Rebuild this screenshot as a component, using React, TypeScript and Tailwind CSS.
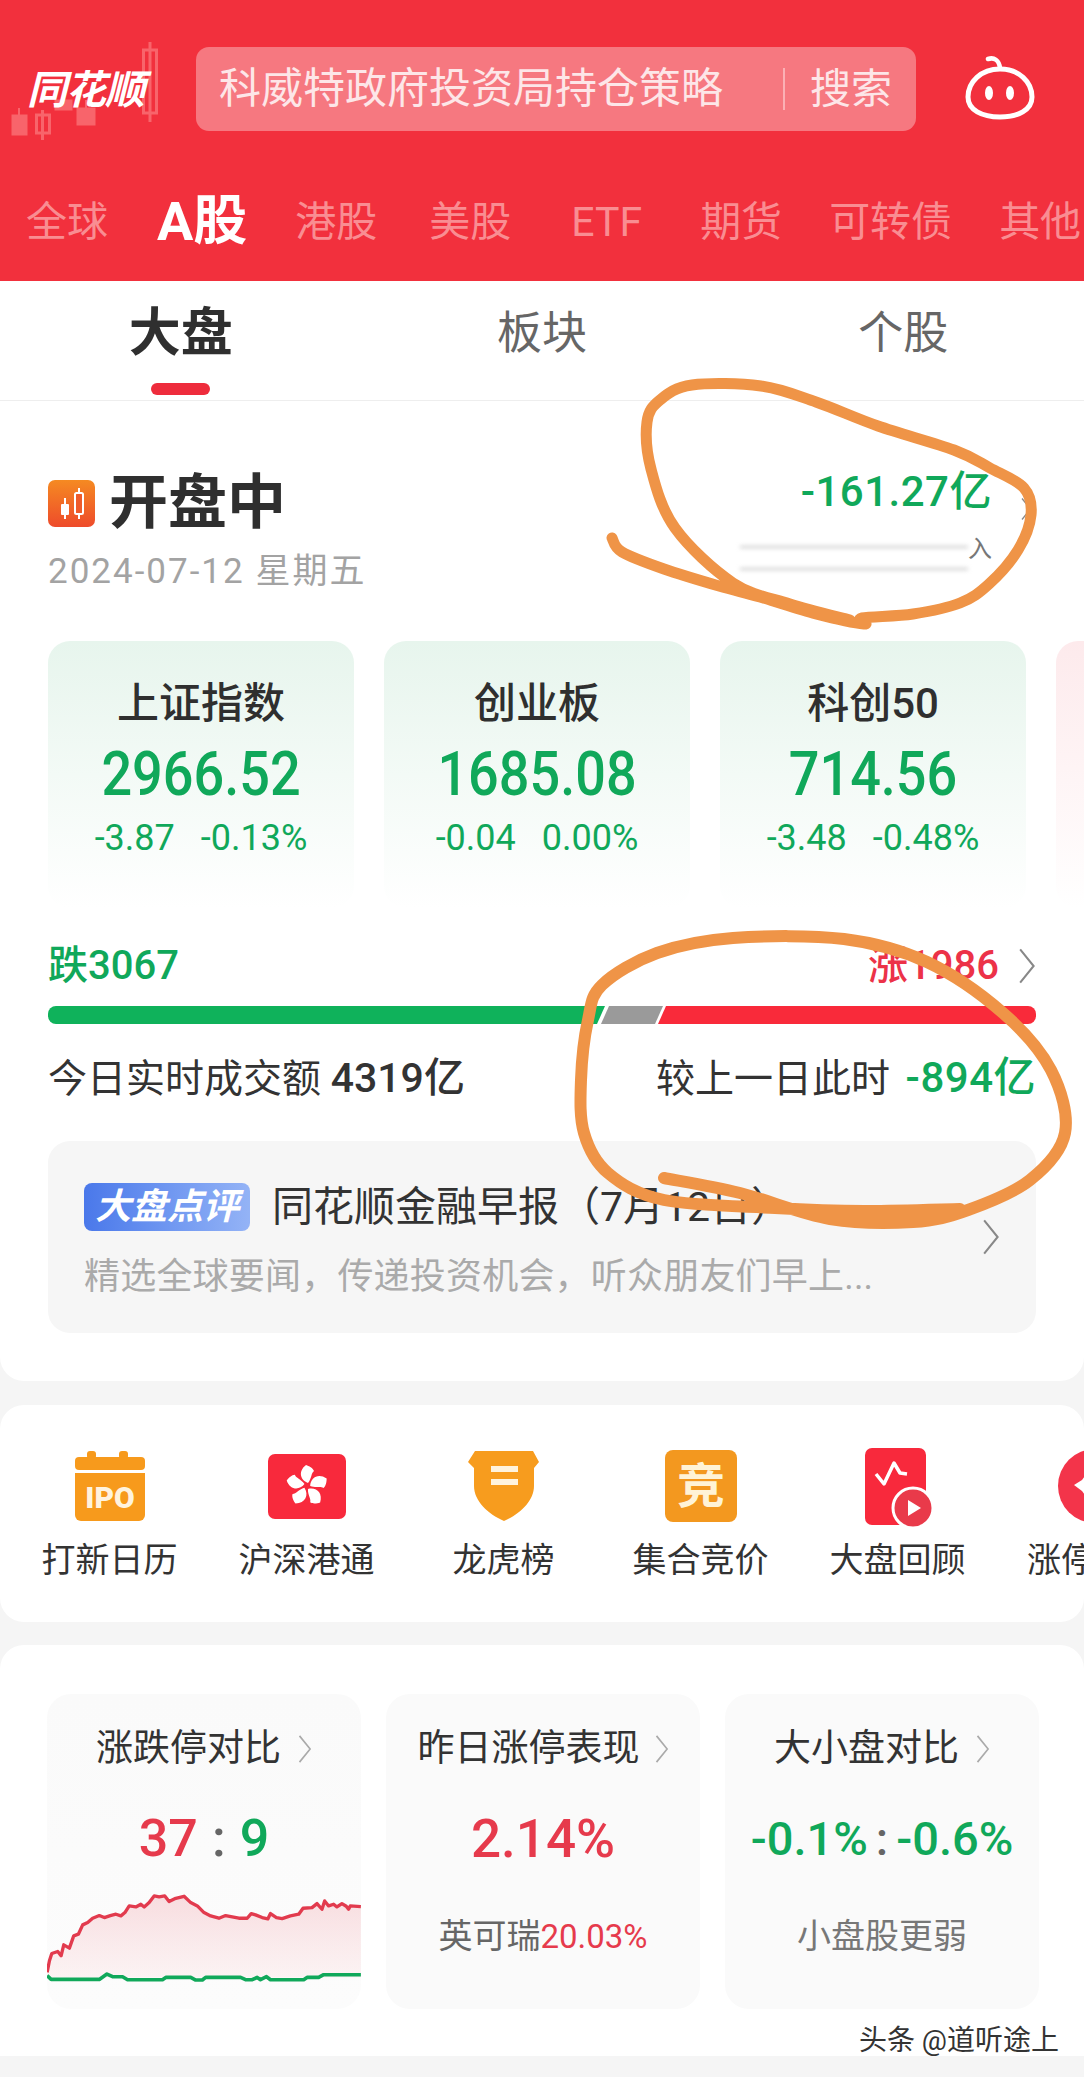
import React from "react";

// Smooth line through a list of points (Catmull-Rom converted to cubic Bezier).
function smooth(pts: number[][]): string {
  let d = `M${pts[0][0]} ${pts[0][1]}`;
  for (let i = 0; i < pts.length - 1; i++) {
    const p0 = pts[Math.max(i - 1, 0)];
    const p1 = pts[i];
    const p2 = pts[i + 1];
    const p3 = pts[Math.min(i + 2, pts.length - 1)];
    d += ` C${p1[0] + (p2[0] - p0[0]) / 6} ${p1[1] + (p2[1] - p0[1]) / 6} ${p2[0] - (p3[0] - p1[0]) / 6} ${p2[1] - (p3[1] - p1[1]) / 6} ${p2[0]} ${p2[1]}`;
  }
  return d;
}

const RING_TOP = [
  [612, 538], [622, 552], [664, 569], [719, 586], [760, 597], [816, 614], [864, 624], [862, 618], [913, 614], [960, 603], [989, 584],
  [1018, 550], [1031, 515], [1024, 488], [990, 468], [954, 450], [878, 426], [816, 402], [761, 386], [692, 385], [660, 400], [647, 422],
  [651, 469], [675, 528], [733, 583], [790, 604], [850, 620],
];
const RING_BOTTOM = [
  [664, 1178], [740, 1193], [830, 1219], [913, 1222], [968, 1210], [1030, 1180], [1065, 1133], [1051, 1070], [1003, 1013], [927, 962],
  [844, 939], [733, 938], [657, 953], [602, 985], [588, 1020], [581, 1080], [584, 1133], [608, 1173], [664, 1200], [775, 1208], [864, 1211], [960, 1209],
];

const RED_LINE = "78,575 85,540 92,518 110,512 120,525 128,492 145,502 158,465 172,460 185,432 200,425 215,412 235,404 250,410 268,404 285,400 300,405 312,395 325,375 345,378 360,370 370,378 385,365 400,345 415,348 432,345 445,362 465,352 490,346 510,365 530,375 550,395 570,405 595,412 615,404 635,408 655,412 680,412 692,398 705,402 725,410 742,414 750,398 768,410 785,413 810,405 835,400 848,382 875,380 890,368 905,385 913,360 925,375 940,370 950,378 965,368 978,376 985,385 990,375 1022,377";
const GREEN_LINE = "78,585 90,596 235,596 258,580 275,588 305,588 320,597 425,597 435,590 510,590 525,598 545,598 555,590 660,590 675,597 695,597 710,590 720,597 738,588 750,597 850,597 860,590 895,590 910,582 1022,582";

function Chevron({ className }: { className: string }) {
  return (
    <svg viewBox="0 0 12 24" fill="none" className={className}>
      <path d="M2 1.500 10.500 12 2 22.500" stroke="currentColor" strokeWidth="1.300" />
    </svg>
  );
}

function LogoCandles() {
  return (
    <svg viewBox="0 0 170 100" className="absolute left-0 -top-[7px] h-[100px] w-[170px]">
      <g fill="#f8646b" stroke="#f8646b">
        <path d="M150 2v80M143.500 10h13v63h-13z" fill="none" strokeWidth="3" />
        <path d="M42.500 70v33M36.500 75h13v18h-13z" fill="none" strokeWidth="3" />
        <rect x="12" y="75" width="15" height="20" />
        <rect x="77" y="68" width="18" height="17" />
        <rect x="55" y="60" width="17" height="10" />
        <path d="M19 68v10M86 60v10" strokeWidth="2" />
      </g>
    </svg>
  );
}

function RobotIcon() {
  return (
    <svg viewBox="0 0 72 66" className="h-[66px] w-[72px]" fill="none">
      <path d="M24 4c6-2 11 1 12 9" stroke="#fff" strokeWidth="4.500" strokeLinecap="round" />
      <path d="M36 14c19 0 32 13 32 28 0 13-14 20-32 20S4 55 4 42c0-15 13-28 32-28Z" stroke="#fff" strokeWidth="5" />
      <ellipse cx="25" cy="38" rx="4" ry="7" fill="#fff" />
      <ellipse cx="46" cy="38" rx="4" ry="7" fill="#fff" />
    </svg>
  );
}

function CandleBadge() {
  return (
    <svg viewBox="0 0 47 47" className="h-[47px] w-[47px]">
      <defs>
        <linearGradient id="badgeFill" x1="0" y1="0" x2="0" y2="1">
          <stop offset="0" stopColor="#f58a22" />
          <stop offset="1" stopColor="#ee4b2b" />
        </linearGradient>
      </defs>
      <rect width="47" height="47" rx="7" fill="url(#badgeFill)" />
      <path d="M31 8v31M17 18v21" stroke="#fff" strokeWidth="2" />
      <rect x="27" y="13" width="8" height="21" rx="1.500" fill="#ee5b2b" stroke="#fff" strokeWidth="2" />
      <rect x="13" y="24" width="8" height="11" rx="1" fill="#fff" />
    </svg>
  );
}

function IpoIcon() {
  return (
    <svg viewBox="0 0 80 80" className="h-[80px] w-[80px]">
      <rect x="5" y="9" width="70" height="13" rx="4" fill="#f79a1c" />
      <rect x="17" y="3" width="9" height="8" rx="3" fill="#f79a1c" />
      <rect x="49" y="3" width="9" height="8" rx="3" fill="#f79a1c" />
      <path d="M5 25h70v42a6 6 0 0 1-6 6H11a6 6 0 0 1-6-6Z" fill="#f79a1c" />
      <text x="40" y="60" textAnchor="middle" fontFamily="Roboto" fontWeight="900" fontSize="30" fill="#fff3de">IPO</text>
    </svg>
  );
}

function HkIcon() {
  return (
    <svg viewBox="0 0 80 80" className="h-[80px] w-[80px]">
      <rect x="1" y="6" width="78" height="65" rx="7" fill="#f8293c" />
      <g fill="#fff" transform="translate(40 38)">
        {[0, 72, 144, 216, 288].map((a) => (
          <path key={a} transform={`rotate(${a})`} d="M1-3C-7-6-9-15-1-21 2-20 6-18 7-15 4-13 5-8 1-3Z" />
        ))}
      </g>
    </svg>
  );
}

function ShieldIcon() {
  return (
    <svg viewBox="0 0 80 80" className="h-[80px] w-[80px]">
      <path d="M11 3h58l6 11-5 6v18c0 15-14 28-30 35C24 66 10 53 10 38V20l-6-6Z" fill="#f79c1e" />
      <rect x="27" y="18" width="27" height="6" fill="#fff3de" />
      <rect x="27" y="31" width="27" height="6" fill="#fff3de" />
    </svg>
  );
}

function BidIcon() {
  return (
    <svg viewBox="0 0 80 80" className="h-[80px] w-[80px]">
      <rect x="4" y="2" width="72" height="72" rx="8" fill="#f3981f" />
      <text x="40" y="55" textAnchor="middle" fontFamily="Noto Sans CJK SC" fontWeight="700" fontSize="48" fill="#fff3d6">竞</text>
    </svg>
  );
}

function ReplayIcon() {
  return (
    <svg viewBox="0 0 80 80" className="h-[80px] w-[80px]">
      <rect x="7" y="0" width="61" height="77" rx="7" fill="#f8293c" />
      <path d="M18 26l8 10 10-21 6 10 7 1" fill="none" stroke="#fff" strokeWidth="3.500" strokeLinejoin="round" />
      <circle cx="55" cy="60" r="20" fill="#e93a4a" stroke="#fff" strokeWidth="3" />
      <path d="M50 52l13 8-13 8Z" fill="#fff" />
    </svg>
  );
}

function LimitIcon() {
  return (
    <svg viewBox="0 0 80 80" className="h-[80px] w-[80px]">
      <circle cx="40" cy="38" r="37" fill="#f3344a" />
      <path d="M19 37 27 32 33 24H47L53 32 61 37 53 43 47 51H33L27 43Z" fill="#fff" />
    </svg>
  );
}

const MARKET_TABS = [
  { label: "全球", cls: "ml-[26px] text-[41px] text-[#f98d92]" },
  { label: "A股", cls: "ml-[49px] text-[54px] font-bold text-white" },
  { label: "港股", cls: "ml-[48px] text-[41px] text-[#f98d92]" },
  { label: "美股", cls: "ml-[52px] text-[41px] text-[#f98d92]" },
  { label: "ETF", cls: "ml-[60px] text-[41px] text-[#f98d92]" },
  { label: "期货", cls: "ml-[58px] text-[41px] text-[#f98d92]" },
  { label: "可转债", cls: "ml-[47px] text-[41px] text-[#f98d92]" },
  { label: "其他", cls: "ml-[47px] text-[41px] text-[#f98d92]" },
];

const INDICES = [
  { name: "上证指数", value: "2966.52", change: "-3.87", pct: "-0.13%" },
  { name: "创业板", value: "1685.08", change: "-0.04", pct: "0.00%" },
  { name: "科创50", value: "714.56", change: "-3.48", pct: "-0.48%" },
];

const SHORTCUTS = [
  { label: "打新日历", icon: <IpoIcon />, cls: "" },
  { label: "沪深港通", icon: <HkIcon />, cls: "" },
  { label: "龙虎榜", icon: <ShieldIcon />, cls: "" },
  { label: "集合竞价", icon: <BidIcon />, cls: "" },
  { label: "大盘回顾", icon: <ReplayIcon />, cls: "" },
  { label: "涨停", icon: <LimitIcon />, cls: "self-start ml-[31px]" },
];

export default function App() {
  return (
    <div className="relative h-[2077px] w-[1084px] overflow-hidden bg-[#f5f5f5] font-['Roboto','Noto_Sans_CJK_SC',sans-serif] text-[#333]">
      {/* Red top bar */}
      <header className="h-[281px] overflow-hidden bg-[#f2303d]">
        <div className="flex pt-[47px]">
          <div className="relative h-[84px] w-[196px] shrink-0">
            <LogoCandles />
            <span className="absolute left-[27px] top-[19px] text-[40px] font-bold italic leading-[50px] tracking-[-1px] text-white">同花顺</span>
          </div>
          <div className="flex h-[84px] w-[720px] shrink-0 items-center rounded-[13px] bg-[#f67880] pl-[23px] text-[#fde6e8]">
            <span className="w-[564px] text-[42px] leading-[50px]">科威特政府投资局持仓策略</span>
            <span className="h-[42px] w-[2px] bg-[#fbb0b5]" />
            <span className="ml-[25px] text-[41px] leading-[50px]">搜索</span>
          </div>
          <div className="flex flex-1 justify-center pt-[8px]">
            <RobotIcon />
          </div>
        </div>
        <nav className="mt-[61px] flex h-[60px] items-center whitespace-nowrap leading-[60px]">
          {MARKET_TABS.map((t) => (
            <span key={t.label} className={`shrink-0 ${t.cls}`}>{t.label}</span>
          ))}
        </nav>
      </header>

      {/* Sub tabs */}
      <div className="grid h-[120px] grid-cols-3 border-b border-[#eeeeee] bg-white">
        <div className="flex flex-col items-center pt-[24px]">
          <span className="text-[52px] font-bold leading-[58px] text-[#2f2f2f]">大盘</span>
          <span className="mt-[20px] h-[12px] w-[59px] rounded-full bg-[#ee2c3c]" />
        </div>
        <div className="pt-[24px] text-center text-[45px] leading-[58px] text-[#666]">板块</div>
        <div className="pt-[24px] text-center text-[45px] leading-[58px] text-[#666]">个股</div>
      </div>

      {/* Market overview */}
      <section className="h-[980px] overflow-hidden rounded-b-[24px] bg-white pt-[73px]">
        <div className="flex justify-between px-[48px]">
          <div>
            <div className="flex h-[58px] items-center gap-[14px]">
              <CandleBadge />
              <h1 className="text-[59px] font-bold leading-[58px] text-[#2f2f2f]">开盘中</h1>
            </div>
            <p className="mt-[20px] text-[35px] leading-[40px] tracking-[2px] text-[#a3a3a3]">2024-07-12 星期五</p>
          </div>
          <div className="relative flex flex-col items-end pr-[44px]">
            <span className="text-[42px] font-medium leading-[36px] tracking-[0.5px] text-[#10a85a]">-161.27亿</span>
            <div className="mt-[36px] flex h-[27px] items-start text-[#777]">
              <span className="h-[24px] w-[228px] border-y-2 border-[#c4c4c4] blur-[2px]" />
              <span className="-mt-[10px] text-[24px] leading-[27px]">入</span>
            </div>
            <Chevron className="absolute right-[4px] top-[22px] h-[26px] w-[12px] text-[#888]" />
          </div>
        </div>

        <div className="ml-[48px] mt-[49px] flex gap-[30px]">
          {INDICES.map((c) => (
            <div key={c.name} className="h-[267px] w-[306px] shrink-0 rounded-[22px] bg-gradient-to-b from-[#e7f5ed] to-white pt-[38px] text-center">
              <div className="text-[42px] font-medium leading-[50px] text-[#2f2f2f]">{c.name}</div>
              <div className="mt-[16px] scale-y-[1.12] text-[54px] font-medium leading-[60px] text-[#10a85a]">{c.value}</div>
              <div className="mt-[13px] flex justify-center gap-[26px] text-[36px] leading-[40px] text-[#10a85a]">
                <span>{c.change}</span>
                <span>{c.pct}</span>
              </div>
            </div>
          ))}
          <div className="h-[267px] w-[306px] shrink-0 rounded-[22px] bg-gradient-to-b from-[#fdeaec] to-white" />
        </div>

        <div className="mx-[48px] mt-[33px] flex h-[50px] items-center justify-between text-[40px] font-medium leading-[50px]">
          <span className="text-[#10a85a]">跌3067</span>
          <div className="flex items-center gap-[18px]">
            <span className="text-[#ec3248]">涨1986</span>
            <Chevron className="h-[38px] w-[19px] text-[#888]" />
          </div>
        </div>

        <div className="mx-[48px] mt-[15px] flex h-[18px] overflow-hidden rounded-[8px]">
          <span className="-ml-[12px] w-[565px] shrink-0 -skew-x-[24deg] bg-[#0fb25b]" />
          <span className="ml-[4px] w-[54px] shrink-0 -skew-x-[24deg] bg-[#9a9a9a]" />
          <span className="ml-[3px] w-[420px] shrink-0 -skew-x-[24deg] bg-[#f92a3a]" />
        </div>

        <div className="mx-[48px] mt-[29px] flex h-[50px] items-center justify-between text-[39px] leading-[50px]">
          <span>今日实时成交额 <span className="text-[41px] font-medium">4319亿</span></span>
          <span>较上一日此时 <span className="ml-[6px] text-[42px] font-medium tracking-[0.5px] text-[#10a85a]">-894亿</span></span>
        </div>

        <div className="mx-[48px] mt-[38px] flex h-[192px] items-start justify-between rounded-[22px] bg-[#f6f6f6] px-[36px] pt-[42px]">
          <div className="w-[880px] shrink-0">
            <div className="flex h-[48px] items-center gap-[22px]">
              <span className="flex h-[48px] w-[166px] items-center justify-center rounded-[8px] bg-gradient-to-r from-[#4a78ea] to-[#94b3f6] text-[36px] font-bold italic leading-[48px] text-white">大盘点评</span>
              <span className="whitespace-nowrap text-[41px] leading-[48px]">同花顺金融早报（7月12日）</span>
            </div>
            <p className="mt-[24px] whitespace-nowrap text-[36px] leading-[44px] tracking-[0.2px] text-[#aaaaaa]">精选全球要闻，传递投资机会，听众朋友们早上...</p>
          </div>
          <Chevron className="mt-[35px] h-[38px] w-[19px] text-[#888]" />
        </div>
      </section>

      {/* Shortcuts */}
      <section className="mt-[24px] flex h-[217px] overflow-hidden rounded-[24px] bg-white pl-[11px] pt-[43px]">
        {SHORTCUTS.map((s) => (
          <div key={s.label} className="flex w-[197px] shrink-0 flex-col items-center">
            {s.icon}
            <span className={`mt-[10px] whitespace-nowrap text-[34px] leading-[44px] text-[#333] ${s.cls}`}>{s.label}</span>
          </div>
        ))}
      </section>

      {/* Comparison cards */}
      <section className="mt-[23px] h-[411px] rounded-t-[24px] bg-white pt-[49px]">
        <div className="ml-[47px] flex gap-[25px]">
          <div className="h-[315px] w-[314px] overflow-hidden rounded-[24px] bg-gradient-to-b from-[#fafafa] to-[#fcfcfc] pt-[30px]">
            <div className="flex h-[50px] items-center justify-center gap-[16px] text-[37px] leading-[50px]">涨跌停对比<Chevron className="h-[30px] w-[15px] text-[#aaa]" /></div>
            <div className="mt-[35px] text-center text-[52px] font-medium leading-[60px]">
              <span className="text-[#e63a4c]">37</span>
              <span className="mx-[14px] text-[#666]">:</span>
              <span className="text-[#10a85a]">9</span>
            </div>
            <svg viewBox="78 300 944 340" className="mt-[12px] h-[113px] w-[314px]" fill="none">
              <defs>
                <linearGradient id="riseFill" x1="0" y1="0" x2="0" y2="1">
                  <stop offset="0" stopColor="#f6cfd3" stopOpacity="0.7" />
                  <stop offset="1" stopColor="#fbe9ea" stopOpacity="0.5" />
                </linearGradient>
              </defs>
              <polygon points={`${RED_LINE} 1022,590 78,590`} fill="url(#riseFill)" />
              <polyline points={RED_LINE} stroke="#e23b4e" strokeWidth="10" strokeLinejoin="round" />
              <polyline points={GREEN_LINE} stroke="#10a85a" strokeWidth="11" strokeLinejoin="round" />
            </svg>
          </div>
          <div className="h-[315px] w-[314px] rounded-[24px] bg-[#fafafa] pt-[30px] text-center">
            <div className="flex h-[50px] items-center justify-center gap-[14px] text-[37px] leading-[50px]">昨日涨停表现<Chevron className="h-[30px] w-[15px] text-[#aaa]" /></div>
            <div className="mt-[35px] text-[53px] font-medium leading-[60px] text-[#e63a4c]">2.14%</div>
            <div className="mt-[45px] text-[34px] leading-[44px] text-[#666]">英可瑞<span className="text-[33px] text-[#e63a4c]">20.03%</span></div>
          </div>
          <div className="h-[315px] w-[314px] rounded-[24px] bg-[#fafafa] pt-[30px] text-center">
            <div className="flex h-[50px] items-center justify-center gap-[16px] text-[37px] leading-[50px]">大小盘对比<Chevron className="h-[30px] w-[15px] text-[#aaa]" /></div>
            <div className="mt-[35px] whitespace-nowrap text-[47px] font-medium leading-[60px] text-[#10a85a]">-0.1%<span className="mx-[8px] text-[#666]">:</span>-0.6%</div>
            <div className="mt-[45px] text-[34px] leading-[44px] text-[#777]">小盘股更弱</div>
          </div>
        </div>
        <p className="mt-[16px] pr-[25px] text-right text-[28px] leading-[32px] text-[#333] [text-shadow:0_0_2px_#fff]">头条 @道听途上</p>
      </section>

      {/* Hand-drawn marker rings over the figures */}
      <svg viewBox="0 0 1084 2077" className="pointer-events-none absolute left-0 top-0 h-[2077px] w-[1084px]" fill="none">
        <path d={smooth(RING_TOP)} stroke="#ef9447" strokeWidth="11" strokeLinecap="round" strokeLinejoin="round" />
        <path d={smooth(RING_BOTTOM)} stroke="#ef9447" strokeWidth="12" strokeLinecap="round" strokeLinejoin="round" />
      </svg>
    </div>
  );
}
